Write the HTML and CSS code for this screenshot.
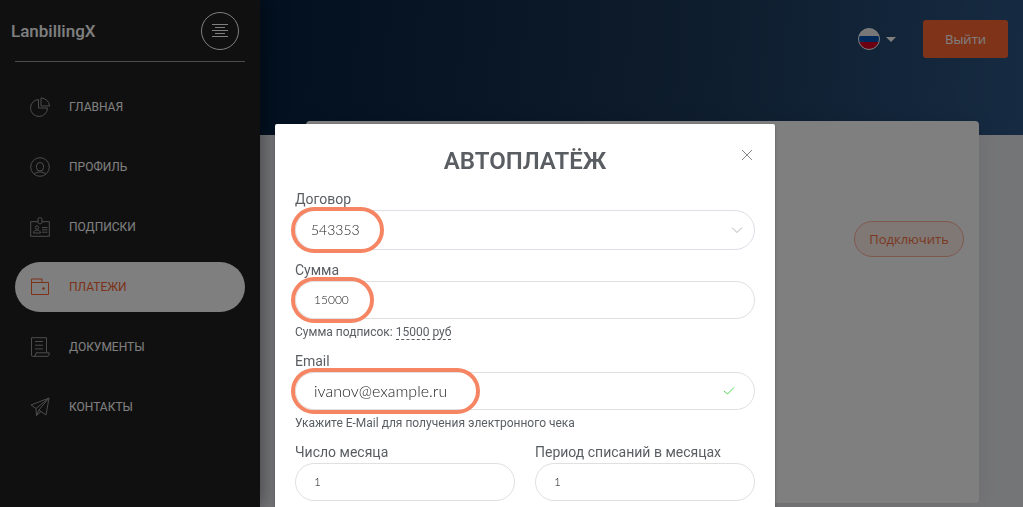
FILE: index.html
```html
<!DOCTYPE html>
<html lang="ru">
  <head>
    <meta charset="UTF-8" />
    <meta name="viewport" content="width=device-width, initial-scale=1.0" />
    <title>LanbillingX</title>
    <link rel="stylesheet" href="styles.css">
  </head>
  <body>
    <div class="page">
      <aside class="sidebar">
        <div class="sidebar-head">
          <span class="logo">LanbillingX</span>
          <button type="button" class="menu-toggle" aria-label="Меню">
            <svg width="16" height="14" viewBox="0 0 16 14"><path d="M0 .5h16M3 3.500h10M0 6.500h16M3 9.500h10M0 12.500h16" /></svg>
          </button>
        </div>
        <nav class="menu">
          <a class="menu-item" href="#">
            <svg class="menu-icon" viewBox="0 0 20 20"><path d="M8.500 2.500A8.500 8.500 0 1 0 17.500 11H8.500zM11 1v8h8.500A8.500 8.500 0 0 0 11 1z" /></svg>
            ГЛАВНАЯ
          </a>
          <a class="menu-item" href="#">
            <svg class="menu-icon" viewBox="0 0 20 20"><circle cx="10" cy="10" r="9.300" /><rect x="6.500" y="5.500" width="7" height="8.500" rx="3.500" /><path d="M4 17c2-1.500 4-2 6-2s4 .5 6 2" /></svg>
            ПРОФИЛЬ
          </a>
          <a class="menu-item" href="#">
            <svg class="menu-icon" viewBox="0 0 20 20"><path d="M8 4.700H.7v14.600h18.600V4.700H12" /><rect x="8" y=".7" width="4" height="6" rx="1.500" /><circle cx="7" cy="10.500" r="1.700" /><path d="M3.500 16c0-2 1.500-2.800 3.500-2.800s3.500.8 3.500 2.800zM12 10.500h5.500M12 12.800h5.500M12 15.200h5.500" /></svg>
            ПОДПИСКИ
          </a>
          <a class="menu-item active" href="#">
            <svg class="menu-icon" viewBox="0 0 20 20"><path d="M1.500 5.500v12h17v-12zM1.500 5.500v-3.500h10.500v3.500" /><circle class="dot" cx="13.500" cy="11.500" r="1.300" /></svg>
            ПЛАТЕЖИ
          </a>
          <a class="menu-item" href="#">
            <svg class="menu-icon" viewBox="0 0 20 20"><path d="M16.500 15.500V.7h-15v17.600q0 1 1 1h15.500q1.300-1 1.300-3.500H6q0 3.500-2 3.500M5 4.500h8M5 8.200h8M5 11.900h8" /></svg>
            ДОКУМЕНТЫ
          </a>
          <a class="menu-item" href="#">
            <svg class="menu-icon" viewBox="0 0 20 20"><path d="M1 8l18-7-3 17-5-3.500L6.500 18.500 6 11.500zM6 11.500L19 1 8.800 13.200 6.500 18.500M8.800 13.200l2.200 1.300" /></svg>
            КОНТАКТЫ
          </a>
        </nav>
      </aside>

      <div class="main">
        <header class="topbar">
          <button type="button" class="lang" aria-label="Русский">
            <span class="flag"></span>
            <span class="caret"></span>
          </button>
          <button type="button" class="logout">Выйти</button>
        </header>
        <section class="card">
          <button type="button" class="connect">Подключить</button>
        </section>
      </div>
    </div>

    <div class="overlay">
      <div class="modal" role="dialog" aria-labelledby="modal-title">
        <button type="button" class="close" aria-label="Закрыть">
          <svg width="12" height="12" viewBox="0 0 12 12"><path d="M1 1l10 10M11 1L1 11" /></svg>
        </button>
        <h1 class="title" id="modal-title">АВТОПЛАТЁЖ</h1>

        <form>
          <div class="field">
            <label for="contract">Договор</label>
            <div class="control">
              <select id="contract" class="input select">
                <option>543353</option>
              </select>
              <svg class="control-icon chevron" width="12" height="12" viewBox="0 0 12 12"><path d="M1 3.500l5 5 5-5" /></svg>
              <span class="ring ring-contract"></span>
            </div>
          </div>

          <div class="field">
            <label for="amount">Сумма</label>
            <div class="control">
              <input type="text" id="amount" class="input" value="15000" />
              <span class="ring ring-amount"></span>
            </div>
            <p class="hint">Сумма подписок: <a href="#">15000 руб</a></p>
          </div>

          <div class="field">
            <label for="email">Email</label>
            <div class="control">
              <input type="email" id="email" class="input email" value="ivanov@example.ru" />
              <svg class="control-icon check" width="12" height="12" viewBox="0 0 12 12"><path d="M1 6l3.500 3L11 2.500" /></svg>
              <span class="ring ring-email"></span>
            </div>
            <p class="hint">Укажите E-Mail для получения электронного чека</p>
          </div>

          <div class="row">
            <div class="field">
              <label for="day">Число месяца</label>
              <input type="text" id="day" class="input" value="1" />
            </div>
            <div class="field">
              <label for="period">Период списаний в месяцах</label>
              <input type="text" id="period" class="input" value="1" />
            </div>
          </div>
        </form>
      </div>
    </div>
  </body>
</html>
```
FILE: styles.css
```css
* {
  box-sizing: border-box;
}

body {
  margin: 0;
  font-family: Roboto, Arial, sans-serif;
  font-size: 14px;
  color: #5a5e62;
  background: #e9eaee;
}

button {
  padding: 0;
  border: none;
  background: none;
  cursor: pointer;
}

svg {
  display: block;
  fill: none;
  stroke: currentColor;
}

.page {
  display: flex;
  height: 100vh;
  overflow: hidden;
}

/* Sidebar */
.sidebar {
  position: relative;
  flex: none;
  width: 260px;
  padding: 0 15px;
  background: #212121;
  box-shadow: 0 0 20px rgba(0, 0, 0, 0.5);
}

.sidebar-head {
  display: flex;
  align-items: center;
  justify-content: space-between;
  height: 62px;
  padding-right: 6px;
  border-bottom: 1px solid #989898;
}

.logo {
  margin-left: -4px;
  font-size: 17px;
  line-height: 20px;
  font-weight: 500;
  color: #fff;
}

.menu-toggle {
  display: flex;
  align-items: center;
  justify-content: center;
  width: 38px;
  height: 38px;
  border: 1px solid #fff;
  border-radius: 50%;
  color: #fff;
}

.menu {
  display: flex;
  flex-direction: column;
  gap: 10px;
  padding-top: 20px;
}

.menu-item {
  display: flex;
  align-items: center;
  gap: 19px;
  height: 50px;
  padding-left: 15px;
  border-radius: 25px;
  font-size: 12px;
  color: #fff;
  text-decoration: none;
}

.menu-icon {
  width: 20px;
  height: 20px;
  color: #999;
}

.menu-item.active {
  background: #fff;
}

.menu-item.active,
.menu-item.active .menu-icon {
  color: #fa6332;
}

.dot {
  fill: currentColor;
  stroke: none;
}

/* Page content */
.main {
  flex: 1;
}

.topbar {
  display: flex;
  justify-content: flex-end;
  align-items: flex-start;
  gap: 27px;
  height: 135px;
  padding: 20px 15px;
  background: linear-gradient(95deg, #04203f, #1a3654 50%, #2c5584);
}

.lang {
  display: flex;
  align-items: center;
  gap: 6px;
  height: 38px;
}

.flag {
  width: 22px;
  height: 22px;
  border: 1px solid #fff;
  border-radius: 50%;
  background: linear-gradient(#eee 33%, #0052b4 33%, #0052b4 66%, #d80027 66%);
}

.caret {
  border: 5px solid transparent;
  border-top-color: #fff;
  border-bottom: none;
}

.logout {
  width: 85px;
  height: 38px;
  border-radius: 3px;
  background: #ff6733;
  font: 500 13px "Open Sans", sans-serif;
  color: #fff;
}

.card {
  display: flex;
  justify-content: flex-end;
  align-items: flex-start;
  min-height: 382px;
  margin: -14px 44px 0 46px;
  padding: 100px 15px;
  position: relative;
  border-radius: 4px;
  background: #fff;
  box-shadow: 0 0 20px rgba(0, 0, 0, 0.08);
}

.connect {
  width: 110px;
  height: 36px;
  border: 1px solid #ffb199;
  border-radius: 18px;
  background: #fff0eb;
  font: 400 13px "Open Sans", sans-serif;
  color: #f9703f;
}

/* Modal */
.overlay {
  position: fixed;
  inset: 0;
  padding: 124px 0 0 27px;
  overflow: hidden;
  background: rgba(0, 0, 0, 0.5);
}

.modal {
  position: relative;
  max-width: 500px;
  margin: 0 auto;
  padding: 21px 20px 20px;
  border-radius: 2px;
  background: #fff;
  box-shadow: 0 1px 3px rgba(0, 0, 0, 0.3);
}

.close {
  position: absolute;
  top: 19px;
  right: 16px;
  display: flex;
  align-items: center;
  justify-content: center;
  width: 24px;
  height: 24px;
  color: #888;
}

.title {
  margin: 0 0 13px;
  font-size: 24px;
  line-height: 32px;
  font-weight: 600;
  text-align: center;
}

.field {
  flex: 1;
  margin-bottom: 11px;
}

.field label {
  display: block;
  padding-bottom: 2px;
  line-height: 18px;
}

.row {
  display: flex;
  gap: 20px;
}

.control {
  position: relative;
}

.input {
  display: block;
  width: 100%;
  height: 38px;
  padding: 0 18px 2px;
  border: 1px solid #e0e0e0;
  border-radius: 20px;
  background: #fff;
  font: 300 12px Lato, sans-serif;
  color: #222;
}

.select {
  height: 40px;
  padding: 0 15px 2px;
  border-color: #dcdfe6;
  font-size: 14px;
  appearance: none;
}

.email {
  font-size: 16px;
}

.control-icon {
  position: absolute;
  top: 0;
  bottom: 0;
  margin: auto;
}

.chevron {
  right: 12px;
  color: #b0b4bc;
}

.check {
  right: 20px;
  color: #4fd84f;
}

/* Highlight around the filled values */
.ring {
  position: absolute;
  top: 50%;
  left: -4px;
  height: 46px;
  margin-top: -23px;
  border: 4px solid #f58563;
  border-radius: 23px;
  pointer-events: none;
}

.ring-contract {
  width: 93px;
}

.ring-amount {
  width: 83px;
}

.ring-email {
  width: 189px;
}

.hint {
  margin: 4px 0 0;
  font-size: 12px;
  line-height: 18px;
}

.hint a {
  color: inherit;
  text-decoration: none;
  border-bottom: 1px dashed;
}
```
